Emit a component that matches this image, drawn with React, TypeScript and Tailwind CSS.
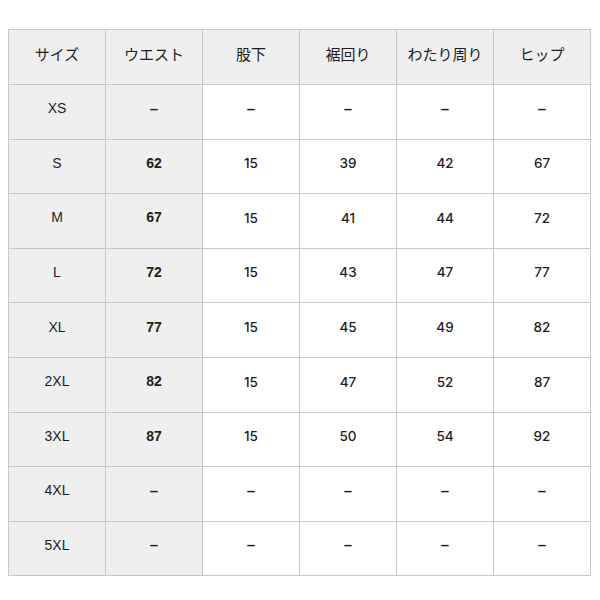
import React from 'react';

const headers = ['サイズ', 'ウエスト', '股下', '裾回り', 'わたり周り', 'ヒップ'];

const rows: string[][] = [
  ['XS', '–', '–', '–', '–', '–'],
  ['S', '62', '15', '39', '42', '67'],
  ['M', '67', '15', '41', '44', '72'],
  ['L', '72', '15', '43', '47', '77'],
  ['XL', '77', '15', '45', '49', '82'],
  ['2XL', '82', '15', '47', '52', '87'],
  ['3XL', '87', '15', '50', '54', '92'],
  ['4XL', '–', '–', '–', '–', '–'],
  ['5XL', '–', '–', '–', '–', '–'],
];

const cellFont = (i: number) => {
  if (i === 0) return 'font-normal font-["Liberation_Sans",sans-serif]';
  if (i === 1) return 'font-bold font-["Liberation_Sans",sans-serif]';
  return 'font-medium font-["Inter",sans-serif] text-[13.5px]';
};

const App = () => {
  return (
    <div className="w-[600px] h-[600px] bg-white pt-[29px] pl-[8px] font-['Noto_Sans','Noto_Sans_CJK_JP',sans-serif]">
      <table className="border-collapse table-fixed w-[583px] text-[#1e1e1e] text-[14px]">
        <thead>
          <tr>
            {headers.map((h) => (
              <th key={h} className="h-[55px] w-[97px] border border-[#c8c8c8] bg-[#efefef] font-normal text-center pb-[6px] text-[15px]">
                {h}
              </th>
            ))}
          </tr>
        </thead>
        <tbody>
          {rows.map((r) => (
            <tr key={r[0]}>
              {r.map((c, i) => (
                <td
                  key={i}
                  className={`h-[54.6px] border border-[#c8c8c8] text-center pb-[6px] ${i < 2 ? 'bg-[#efefef]' : 'bg-white'} ${c === '–' ? 'font-bold font-["Liberation_Sans",sans-serif] text-[15px]' : cellFont(i)}`}
                >
                  {c}
                </td>
              ))}
            </tr>
          ))}
        </tbody>
      </table>
    </div>
  );
};

export default App;
